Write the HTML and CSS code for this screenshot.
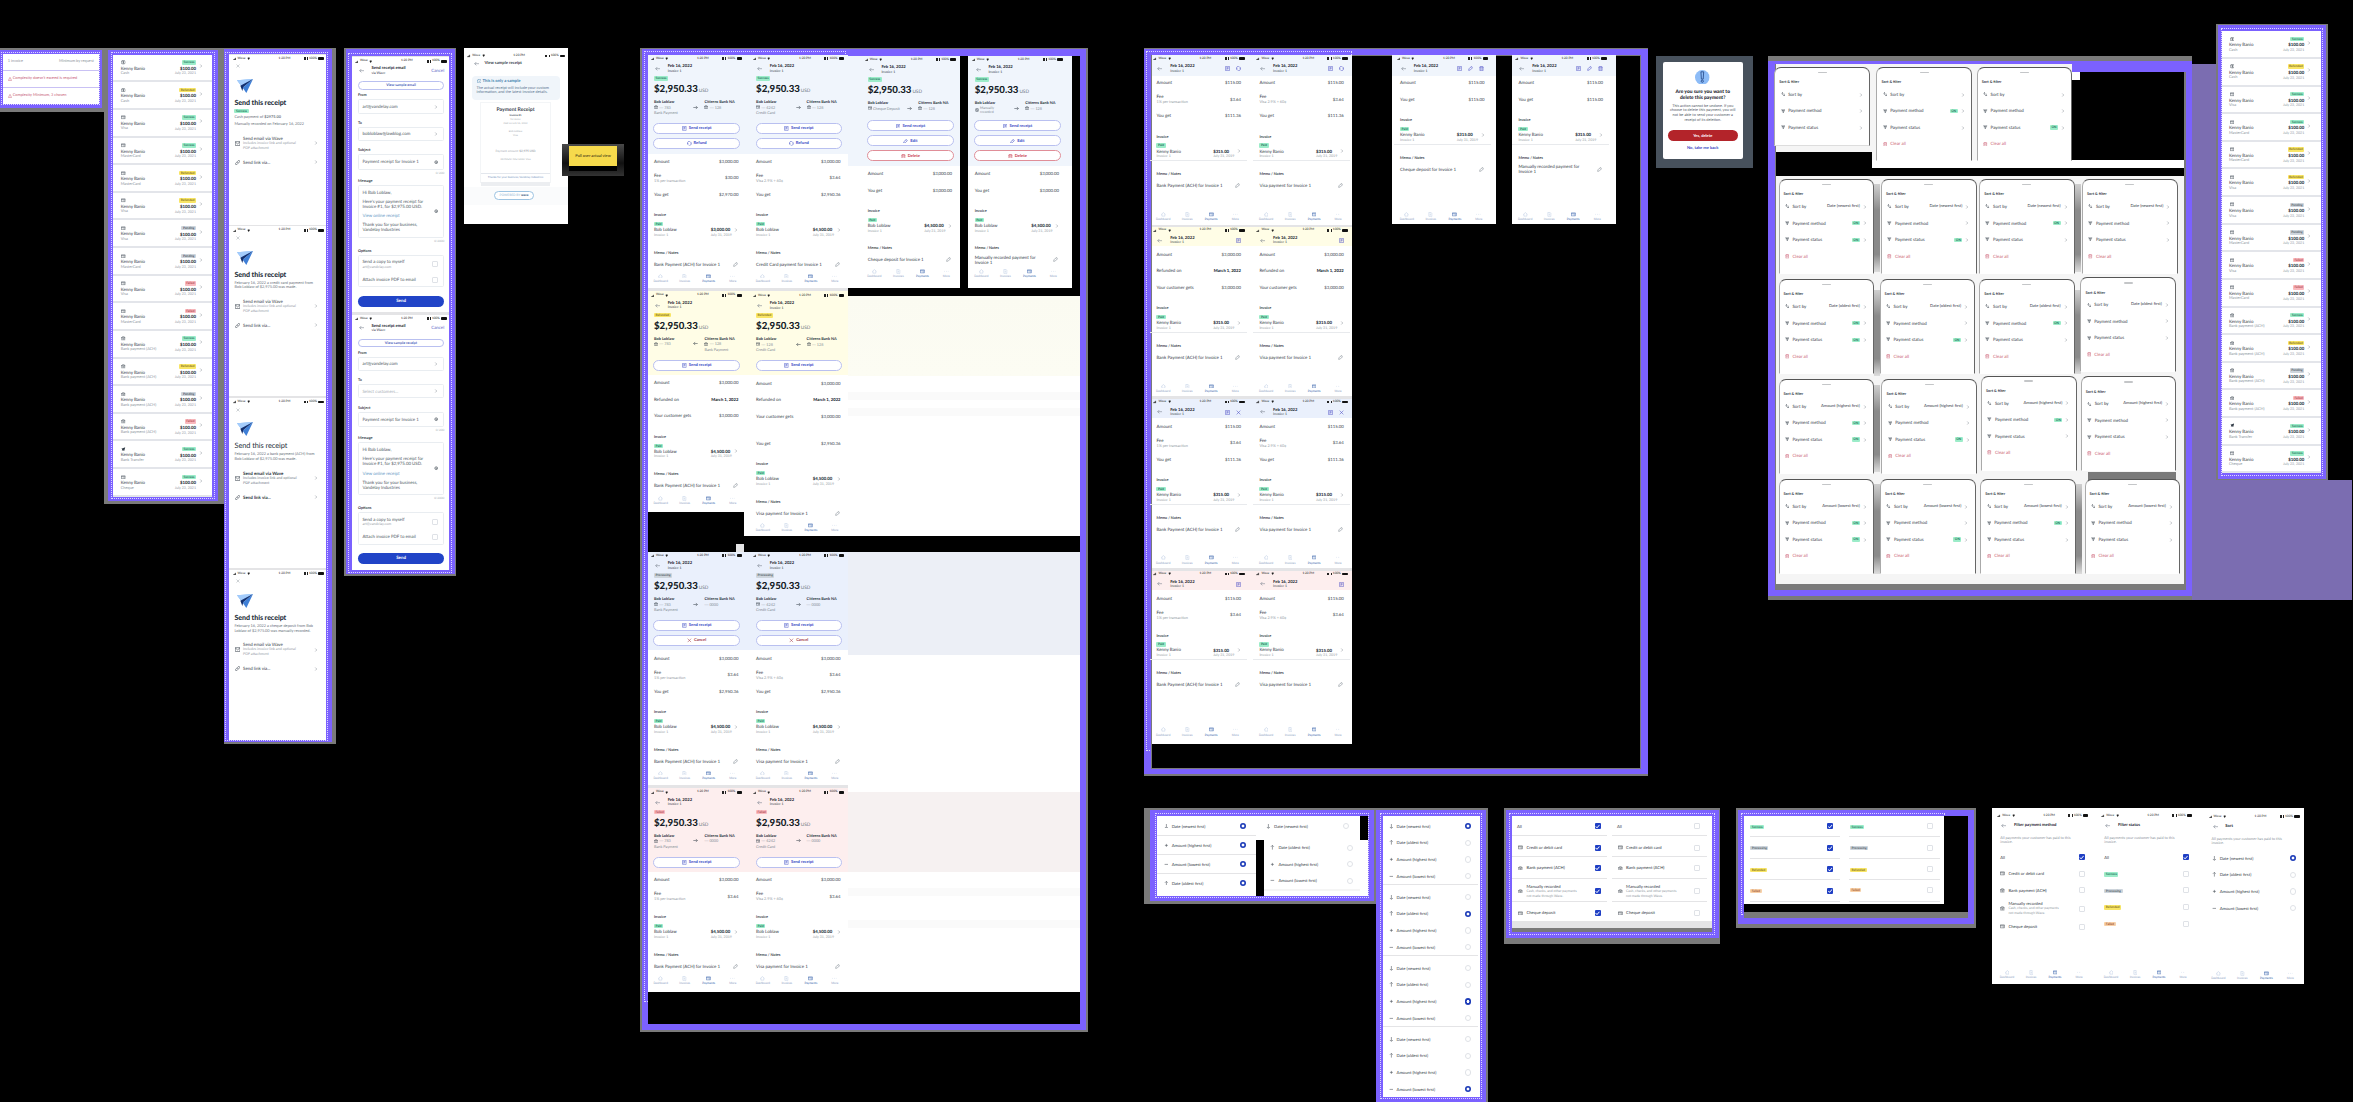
FILE: index.html
```html
<!DOCTYPE html>
<html lang="en">
<head>
<meta charset="utf-8">
<title>Payments - flows</title>
<link rel="stylesheet" href="styles.css">
</head>
<body>
<svg class="sprite" aria-hidden="true">
  <symbol id="left" viewBox="0 0 16 16"><path d="M15 8H2M7 3L2 8l5 5"/></symbol>
  <symbol id="right" viewBox="0 0 16 16"><path d="M1 8h13M9 3l5 5-5 5"/></symbol>
  <symbol id="chev" viewBox="0 0 16 16"><path d="M5 2l6 6-6 6"/></symbol>
  <symbol id="close" viewBox="0 0 16 16"><path d="M2 2l12 12M14 2L2 14"/></symbol>
  <symbol id="receipt" viewBox="0 0 16 16"><path d="M2 1h12v14H2zM5 5h6M5 8h6M5 11h3"/></symbol>
  <symbol id="refund" viewBox="0 0 16 16"><path d="M2 10a6 6 0 0 1 9-7.500M14 6a6 6 0 0 1-9 7.500M0 8l2 3 3-2M16 8l-2-3-3 2"/></symbol>
  <symbol id="pencil" viewBox="0 0 16 16"><path d="M2 14l1-5 8-8 4 4-8 8zM9 4l3 3"/></symbol>
  <symbol id="trash" viewBox="0 0 16 16"><path d="M1 4h14M5 4V1h6v3M3 4v11h10V4M6 7v5M10 7v5"/></symbol>
  <symbol id="bank" viewBox="0 0 16 16"><path d="M1 6l7-5 7 5zM3 6v7M8 6v7M13 6v7M1 14h14"/></symbol>
  <symbol id="card" viewBox="0 0 16 16"><path d="M1 3h14v10H1zM1 6h14M9 10h4"/></symbol>
  <symbol id="coin" viewBox="0 0 16 16"><circle cx="8" cy="8" r="7"/><path d="M10 5c-4-2-5 2-2 3s2 5-2 3M8 3v10"/></symbol>
  <symbol id="swift" viewBox="0 0 16 16"><path class="solid" d="M1 6L15 1l-4 13-4-3-4 2 1-5z"/></symbol>
  <symbol id="mail" viewBox="0 0 16 16"><path d="M1 2h14v12H1zM1 3l7 6 7-6"/></symbol>
  <symbol id="link" viewBox="0 0 16 16"><path d="M7 5l3-3c3-2 6 1 4 4l-3 3c-1 1-3 1-4 0M9 11l-3 3c-3 2-6-1-4-4l3-3c1-1 3-1 4 0"/></symbol>
  <symbol id="home" viewBox="0 0 16 16"><path d="M1 8l7-6 7 6M3 7v7h10V7"/></symbol>
  <symbol id="doc" viewBox="0 0 16 16"><path d="M3 1h7l3 4v10H3zM6 7h4M6 10h4"/></symbol>
  <symbol id="dots" viewBox="0 0 16 16"><path d="M1 8h2M7 8h2M13 8h2"/></symbol>
  <symbol id="sort" viewBox="0 0 16 16"><path d="M5 10V2M2 5l3-3 3 3M11 6v8M8 11l3 3 3-3"/></symbol>
  <symbol id="filter" viewBox="0 0 16 16"><path d="M1 3h14M3 7h10M6 11h4M4 3l3 4M12 3L9 7M8 8v6"/></symbol>
  <symbol id="down" viewBox="0 0 16 16"><path d="M8 0v14M3 10l5 5 5-5"/></symbol>
  <symbol id="up" viewBox="0 0 16 16"><path d="M8 16V2M3 6l5-5 5 5"/></symbol>
  <symbol id="plus" viewBox="0 0 16 16"><path d="M8 3v10M3 8h10"/></symbol>
  <symbol id="minus" viewBox="0 0 16 16"><path d="M2 8h12"/></symbol>
  <symbol id="gear" viewBox="0 0 16 16"><circle cx="8" cy="8" r="5"/><circle cx="8" cy="8" r="1"/></symbol>
  <symbol id="info" viewBox="0 0 16 16"><circle cx="8" cy="8" r="7"/><path d="M8 7v5M8 4v1"/></symbol>
  <symbol id="warn" viewBox="0 0 16 16"><path d="M8 1l7 13H1zM8 6v4M8 12v1"/></symbol>
  <symbol id="signal" viewBox="0 0 16 16"><path class="solid" d="M0 12h3v3H0zM4 9h3v6H4zM8 6h3v9H8zM12 3h3v12h-3z"/></symbol>
  <symbol id="wifi" viewBox="0 0 16 16"><path class="solid" d="M8 14L2 5c4-3 8-3 12 0z"/></symbol>
  <symbol id="plane" viewBox="0 0 48 42"><path fill="#7db4f5" d="M0 4L48 0 17 26z"/><path fill="#3f7fd6" d="M17 26L48 0 28 42z"/><path fill="#a4ccfb" d="M0 4L48 0 12 20z"/><path fill="#14306f" d="M10 20L48 0 19 24l-3 12z"/></symbol>
  <symbol id="alert" viewBox="0 0 16 16"><circle cx="8" cy="8" r="8" fill="#8dbcf7"/><path fill="#8dbcf7" stroke="#173a7a" stroke-width=".8" d="M6.500 2h3L9 10H7z"/><circle cx="8" cy="12.300" r="1.200" fill="#8dbcf7" stroke="#173a7a" stroke-width=".8"/></symbol>
</svg>
<main class="canvas" id="canvas"></main>
<script src="app.js"></script>
</body>
</html>
```
FILE: styles.css
```css
* { box-sizing: border-box; }
body {
  margin: 0;
  background: #000;
  overflow: hidden;
  font-family: Lato, "Open Sans", sans-serif;
  font-size: 4.45px;
  line-height: 1.2;
  color: #36404a;
  text-rendering: geometricPrecision;
  white-space: nowrap;
}
.sprite { position: absolute; width: 0; height: 0; }
.canvas { position: relative; width: 2353px; height: 1102px; overflow: hidden; background: #000; }
.item { position: absolute; }

/* icons */
.ic { width: 4.6px; height: 4.6px; flex: none; fill: none; stroke: currentColor; stroke-width: 1.7; display: block; }
.ic .solid, .solid { fill: currentColor; stroke: none; }
.ic-chev { width: 4px; height: 4px; color: #66707a; }

/* surfaces */
.grey { background: #7a7a7a; }
.purple { background: #7b61ff; }
.haze { background: #7b6db1; }
.white { background: #fff; }
.paper { background: #f5f5f5; }
.mist { background: #e4e4e6; }
.black { background: #000; }
.shade { background: linear-gradient(#cfcfcf, #8a8a8a 30%, #8a8a8a 80%, #ddd); }
.dotted { border: 1px dotted rgba(255, 255, 255, .75); }
.t-blue { background: #f0f5fc; }
.t-yellow { background: #fffde6; }
.t-indigo { background: #eaf0fc; }
.t-red { background: #fdeeee; }
.w-yellow { background: linear-gradient(#fbfbf1, #fcfcf3); }
.w-indigo { background: #eceff6; }
.w-red { background: #f6f1f1; }
.band { background: #fafafa; }

/* badges */
.badge { display: inline-block; padding: 0 1.5px; height: 4.4px; line-height: 4.4px; font-size: 3.2px; font-weight: 700; border-radius: 1px; }
.b-green { background: #9cecc9; color: #20735a; }
.b-yellow { background: #f8e566; color: #857020; }
.b-grey { background: #ced5dc; color: #505a66; }
.b-red { background: #f9b8bd; color: #b04a54; }
.b-orange { background: #f8d0a8; color: #a1562c; }

/* status bar */
.status { display: grid; grid-template-columns: 4px 36px 1fr auto; align-items: center; height: 8px; padding: 0 2.6px 0 3.3px; font-size: 3.1px; color: #222; column-gap: 1px; flex: none; }
.status .ic { width: 3.4px; height: 3.4px; }
.status .carrier { display: flex; align-items: center; gap: 1.5px; }
.status .time { padding-left: 4px; }
.status .power { display: flex; align-items: center; gap: 1.2px; }
.dot { width: 2px; height: 2.6px; background: #222; }
.dot.thin { width: 1px; }
.battery { width: 5.6px; height: 2.6px; border-radius: .8px; background: #111; }

/* screens */
.screen { display: flex; flex-direction: column; }
.head { display: flex; align-items: center; height: 12px; padding: 0 6.3px; flex: none; }
.head .back { color: #77818c; width: 5.4px; height: 5.4px; margin: 0 7.3px 0 1px; }
.head .titles { flex: 1; }
.head b { display: block; font-size: 4.2px; line-height: 4.6px; color: #1c2530; }
.head small { display: block; font-size: 3.5px; line-height: 4.2px; }
.head .tools { display: flex; gap: 6px; color: #4a4bc4; padding-right: .2px; }
.head .tools .ic { width: 5px; height: 5px; }
.hero { padding: 0 6.3px; display: flex; flex-direction: column; flex: none; }
.hero .tag { height: 8.5px; padding-top: 1.8px; line-height: 4.4px; display: flex; }
.hero .sum { height: 13.5px; display: flex; align-items: baseline; gap: 1px; font-size: 9.7px; line-height: 13.5px; font-weight: 900; color: #161d27; letter-spacing: -.02px; }
.hero .sum span { font-size: 4.7px; font-weight: 400; color: #6a737d; }
.parties { display: grid; grid-template-columns: 39.5px 11px 1fr; height: 26.5px; padding-top: 2.5px; line-height: 5.4px; font-size: 3.8px; color: #858d96; }
.parties.short { height: 22.8px; }
.parties b { display: block; font-size: 3.9px; color: #2a333d; }
.parties .acct { display: flex; align-items: center; gap: 1.3px; }
.parties .ic { width: 4px; height: 4px; color: #39424c; }
.parties .via { align-self: start; margin-top: 5.6px; width: 5px; height: 5px; }
.parties .two { line-height: 4.8px; font-size: 3.5px; white-space: normal; width: 20px; }
.btn { display: flex; align-items: center; justify-content: center; gap: 2px; height: 11px; margin-bottom: 4px; border: 1px solid #b9c0f0; border-radius: 6px; background: #fff; color: #3546c4; font-weight: 700; font-size: 4.1px; flex: none; width: 86.5px; margin-left: -.5px; }
.btn .ic { width: 4.8px; height: 4.8px; }
.btn.danger { color: #c63648; border-color: #e08e98; }
.btn.cancel { color: #a03a4c; }
.row { height: 16.5px; padding: 0 6.3px; display: flex; align-items: center; justify-content: space-between; flex: none; }
.row .val { font-size: 4.3px; }
.row small { display: block; font-size: 3.8px; color: #959da6; line-height: 4.4px; margin-top: .6px; }
.row b { font-weight: 900; font-size: 4.2px; color: #242d37; }
.row.gap { margin-top: 10.7px; }
.label { margin-top: 7.5px; height: 9px; line-height: 9px; padding: 0 6.3px; font-weight: 700; font-size: 3.75px; flex: none; }
.inv { height: 20.5px; padding: 2px 6.3px 0; display: grid; grid-template-columns: 1fr auto 6.5px; grid-template-rows: 6px 5.2px 5px; flex: none; align-items: center; }
.inv .badge { grid-column: 1 / 4; justify-self: start; }
.inv b { color: #2a333d; font-weight: 900; font-size: 4.3px; }
.inv .ic { justify-self: end; }
.inv small { font-size: 3.6px; color: #949ca5; }
.inv small + small { text-align: right; }
.lined { border-bottom: 1px solid #e8eaed; }
.note { height: 15px; padding: 0 7px 0 6.3px; display: flex; align-items: center; justify-content: space-between; flex: none; line-height: 5px; }
.label.memo { margin-top: 8px; }
.note span { white-space: pre; }
.note .ic { color: #7b848e; width: 5px; height: 5px; }
.nav { margin-top: auto; height: 12px; display: grid; grid-template-columns: repeat(4, 24px); font-size: 3px; color: #8499bd; text-align: center; padding-left: 1px; flex: none; }
.nav div { display: flex; flex-direction: column; align-items: center; gap: 1.5px; }
.nav .ic { color: #b5c8e2; width: 4.8px; height: 4.8px; }
.nav .on, .nav .on .ic { color: #2d5aa8; }

/* payment list */
.list { display: flex; flex-direction: column; }
.pay { height: 27.75px; border-bottom: 2px solid #e3e5ea; background: #fff; padding: 4.6px 7.4px 0; display: grid; grid-template-columns: 25px 50.3px 1fr; grid-template-rows: 6.3px 5.5px 5px; align-items: center; }
.pay .lead { margin-left: .8px; width: 4.6px; height: 4.6px; }
.pay .badge, .pay b, .pay .date { justify-self: end; }
.pay .badge { grid-column: 2; }
.pay .name { grid-column: 1; }
.pay b { grid-column: 2; font-weight: 900; font-size: 4.3px; color: #2a333d; }
.pay .ic-chev { grid-column: 3; grid-row: 1 / 4; justify-self: center; margin-bottom: 3px; }
.pay small { font-size: 3.6px; color: #8e969f; }
.pay small.kind { grid-column: 1; grid-row: 3; font-size: 3.9px; }

/* errors */
.errors { display: flex; flex-direction: column; gap: 1.3px; background: #c9c1f4; }
.errors div { flex: 1; display: flex; align-items: center; justify-content: space-between; padding: 0 5px; background: #fff; font-size: 3.9px; color: #8f969e; }
.errors .err { justify-content: flex-start; gap: 1px; color: #c76078; }
.errors .ic { width: 4px; height: 4px; }

/* share receipt */
.share .x { margin: 1.6px 0 0 7px; color: #8a939c; width: 4px; height: 4px; }
.share .plane { width: 16px; height: 14px; margin: 10.7px 0 0 7.5px; flex: none; }
.share h2 { margin: 5px 0 0 5.2px; font-size: 7.1px; line-height: 9px; font-weight: 900; color: #26303b; letter-spacing: -.07px; }
.share h2.thin { font-weight: 400; font-size: 7.4px; }
.share .copy { padding: 2.2px 0 0 5.2px; font-size: 3.9px; line-height: 4.7px; color: #6a737d; }
.share .copy.tall { line-height: 6.4px; padding-top: 1.8px; }
.share .copy .badge { display: table; margin: 0 0 1.2px; }
.share .opt { display: grid; grid-template-columns: 7.7px 1fr 7px; padding: 0 5.5px 0 6px; align-items: center; height: 19px; margin-top: 6.8px; }
.share .opt + .opt { margin-top: 0; height: 18px; padding-top: 1px; }
.share .opt p { margin: 0; line-height: 5px; }
.share .opt p.strong { font-weight: 700; color: #2a333d; }
.share .opt small { font-size: 3.65px; color: #969ea7; display: block; line-height: 4.9px; }
.share .opt .ic:first-child { width: 5.2px; height: 5.2px; }

/* email form */
.email .head { height: 16px; padding: 0 5px 5px 6.3px; }
.email .head .back { margin: 0 7px 0 1px; }
.email .head a { color: #5a66c8; font-size: 4.4px; }
.email .btn { height: 8.5px; width: 86px; margin: 0 0 1.7px 6.3px; font-size: 3.6px; color: #3f58b8; }
.field-label { font-size: 3.75px; font-weight: 700; height: 8px; line-height: 8px; padding-left: 6.3px; flex: none; }
.box { margin: 0 5px 0 6.3px; border: 1px solid #e9edf1; border-radius: 1.5px; display: flex; align-items: center; justify-content: space-between; padding: 0 5px 0 3.5px; flex: none; height: 14.3px; font-size: 4.4px; color: #505a64; }
.box + .field-label { margin-top: 5.1px; }
.box.subject { height: 15.5px; }
.box.msg { height: 53px; }
.box.msg p { margin: 0 0 4px; line-height: 5.1px; }
.box.msg p:last-child { margin: 0; }
.box.msg a { color: #5f96c4; }
.box .ic { color: #39424c; width: 4.4px; height: 4.4px; stroke-width: 2.2; }
.box .ic-chev { color: #66707a; width: 4px; height: 4px; stroke-width: 1.7; }
.box .ph { color: #a9b0b7; }
.counter { text-align: right; padding-right: 5px; height: 7px; font-size: 3px; line-height: 6px; color: #a9b0b7; flex: none; }
.counter.big { height: 9px; }
.box.opts { height: 32.5px; flex-direction: column; align-items: stretch; justify-content: space-around; }
.box.opts > div { display: flex; justify-content: space-between; align-items: center; }
.box.opts small { display: block; font-size: 3.6px; color: #9aa1a9; }
.send { margin: 8.6px 5px 0 6.3px; height: 10.8px; line-height: 10.8px; border-radius: 6px; background: #2144c7; color: #fff; text-align: center; font-weight: 700; flex: none; }

/* controls */
.check { width: 6px; height: 6px; border-radius: 1px; border: 1px solid #dfe2e7; background: #fff; flex: none; display: block; }
.check.on { background: #1f3fc4; border: 0; }
.check.on::after { content: ""; display: block; width: 6px; height: 6px; background: #fff; clip-path: polygon(20% 48%, 40% 66%, 76% 24%, 86% 34%, 41% 84%, 12% 58%); }
.radio { width: 6.2px; height: 6.2px; border-radius: 50%; border: 1px solid #dfe2e7; background: #fff; flex: none; }
.radio.on { border: 0; background: radial-gradient(circle, #fff 0 1.2px, #1d3cb8 1.7px); }

/* option rows */
.options { display: flex; flex-direction: column; background: #fff; font-size: 4.2px; }
.options .o { display: flex; align-items: center; height: 16.6px; flex: none; }
.options .o:has(small) { height: 19.5px; }
.options .o > .ic { width: 4.8px; height: 4.8px; margin-right: 3.3px; color: #39424c; }
.options .o > span:not(.badge) { flex: 1; }
.options small { display: block; font-size: 3.4px; line-height: 4.7px; color: #929aa3; }

/* filter sheet */
.sheet { background: #fff; border: 1px solid #6a6a6a; border-color: #555 #666 transparent #aaa; border-radius: 7px 7px 0 0; display: flex; flex-direction: column; }
.sheet.first { border-bottom-color: #ddd; }
.grip { width: 9px; height: 1.6px; border-radius: 1px; background: #c4c6c8; margin: 3.7px auto 0; flex: none; }
.sheet h3 { margin: 5px 0 0 4px; font-size: 3.8px; line-height: 8px; font-weight: 700; }
.srow { display: flex; align-items: center; height: 16.5px; padding: 0 6.2px 0 5.3px; flex: none; }
.srow > .ic:first-child { margin-right: 3px; }
.srow span { flex: 1; }
.srow .value { flex: none; font-size: 4.1px; margin-right: 3px; }
.srow .badge { flex: none; margin-right: 3px; }
.srow.clear { color: #cc5f74; }

/* confirm dialog */
.modal { background: #47515c; padding: 6px 10px 9.3px 7px; display: flex; }
.dialog { flex: 1; background: #fff; border-radius: 2px; display: flex; flex-direction: column; align-items: center; text-align: center; padding-top: 7.5px; }
.dialog .alert { width: 14.6px; height: 14.6px; }
.dialog h2 { margin: 4.8px 0 0; font-size: 4.9px; line-height: 6.3px; font-weight: 900; color: #1a222c; }
.dialog p { margin: 2.2px 0 0; font-size: 3.85px; line-height: 4.8px; color: #58616b; }
.dialog .yes { width: 70px; height: 11px; line-height: 11px; margin-top: 7.5px; border-radius: 6px; background: #b3242a; color: #fff; font-weight: 700; font-size: 4px; }
.dialog a { margin-top: 5px; color: #3546c4; font-weight: 700; font-size: 4.1px; }

/* sample receipt */
.sample { background: #fff; padding-top: 4px; }
.sample .head { height: 7px; padding: 0 10px; }
.sample .head .back { margin: 0 5px 0 0; }
.sample .head b { font-weight: 700; color: #39424c; }
.sample .tip { margin: 8.5px 8px 0; height: 24px; border-radius: 4px; background: #f0f5fa; padding: 2px 4.5px; line-height: 4.4px; font-size: 3.9px; color: #5c7590; flex: none; }
.sample .tip div { display: flex; align-items: center; gap: 1.5px; color: #3b7dad; font-weight: 700; height: 7px; margin-bottom: 1px; font-size: 4.2px; }
.sample .slip { margin: 2.5px 17px 0 16px; height: 80.5px; border: 1px solid #f3f5f7; text-align: center; font-size: 2.6px; line-height: 4px; padding-top: 3.500px; color: #a7adb4; flex: none; display: flex; flex-direction: column; }
.slip h2 { margin: 0; font-size: 5.1px; line-height: 6px; color: #39424c; font-weight: 700; }
.slip .sub { color: #39424c; font-weight: 700; }
.slip .pay-line { margin-top: 12.5px; font-size: 3px; }
.slip .pay-line + div { margin-top: 4px; }
.slip .foot { margin-top: 12px; height: 7px; line-height: 7px; border-top: 1px solid #e3e7ed; color: #7191bd; font-size: 2.800px; }
.slip .bar { height: 3.5px; background: #eceef1; margin-top: 2px; flex: none; }
.sample .strip { margin-top: 4px; background: #fafbfc; height: 18px; flex: none; display: flex; justify-content: center; align-items: center; }
.pill { height: 8.7px; padding: 0 4.5px; border: 1px solid #9cc3e2; border-radius: 5px; line-height: 6.900px; font-size: 3.2px; color: #8cb0d0; background: #fff; margin-right: 4px; }
.pill b { color: #2a4f7a; }

/* sticky note */
.sticky-shadow { background: linear-gradient(#4a4a4a, #111 60%, #333); }
.sticky { background: #f6da4c; line-height: 20px; text-align: center; font-size: 3.9px; color: #5c5120; font-weight: 700; }

/* filter screens */
.desc { padding: 0 6.3px; height: 10px; font-size: 3.7px; line-height: 4.7px; color: #8a929b; margin: 4px 0 0; flex: none; }
.picker { flex: 1; background: none; padding: 3.3px 6.3px 0; }
```
FILE: app.js
```javascript
const out = [];
const ic = (n, c = '') => `<svg class="ic ${c}"><use href="#${n}"/></svg>`;
const chev = ic('chev', 'ic-chev');
const put = (x, y, w, h, cls, html = '') =>
  out.push(`<div class="item ${cls}" style="left:${x}px;top:${y}px;width:${w}px;height:${h}px">${html}</div>`);
/* rectangle given by its two corners */
const rect = (x1, y1, x2, y2, cls) => put(x1, y1, x2 - x1, y2 - y1, cls);

const TONE = { Success: 'green', Paid: 'green', ON: 'green', Refunded: 'yellow', Pending: 'grey', Processing: 'grey', Failed: 'red' };
const badge = (t, tone = TONE[t]) => `<span class="badge b-${tone}">${t}</span>`;
const status = `<div class="status">${ic('signal')}<span class="carrier">Wave ${ic('wifi')}</span><span class="time">1:20 PM</span><span class="power"><i class="dot"></i><i class="dot thin"></i>100%<i class="battery"></i></span></div>`;
const nav = `<div class="nav"><div>${ic('home')}Dashboard</div><div>${ic('doc')}Invoices</div><div class="on">${ic('card')}Payments</div><div>${ic('dots')}More</div></div>`;
const head = (tools = []) => `<div class="head">${ic('left', 'back')}<div class="titles"><b>Feb 16, 2022</b><small>Invoice 1</small></div><div class="tools">${tools.map(t => ic(t)).join('')}</div></div>`;
const row = ([k, v, sub, cls = '']) => `<div class="row ${cls}"><span>${k}${sub ? `<small>${sub}</small>` : ''}</span><span class="val">${v}</span></div>`;
const tail = (who, sum, date, note, lined) => `<div class="label">Invoice</div>
  <div class="inv ${lined ? 'lined' : ''}">${badge('Paid')}<span>${who}</span><b>${sum}</b>${chev}<small>Invoice 1</small><small>${date}</small></div>
  <div class="label memo">Memo / Notes</div><div class="note"><span>${note}</span>${ic('pencil')}</div>${nav}`;

/* ---- validation messages ---- */
rect(0, 48, 104, 112, 'grey');
rect(0, 50, 102, 107.5, 'purple');
rect(1, 52, 100, 105, 'dotted');
put(2.7, 54, 96.3, 49.5, 'errors', `<div><span>1 invoice</span><span>Minimum by request</span></div>
<div class="err">${ic('warn')}Complexity doesn't exceed is required</div><div class="err">${ic('warn')}Complexity Minimum, 3 chosen</div>`);

/* ---- payment lists ---- */
const payments = [['coin', 'Cash', 'Success'], ['coin', 'Cash', 'Refunded'], ['card', 'Visa', 'Success'], ['card', 'MasterCard', 'Success'],
  ['card', 'MasterCard', 'Refunded'], ['card', 'Visa', 'Refunded'], ['card', 'Visa', 'Pending'], ['card', 'MasterCard', 'Pending'],
  ['card', 'Visa', 'Failed'], ['card', 'MasterCard', 'Failed'], ['bank', 'Bank payment (ACH)', 'Success'], ['bank', 'Bank payment (ACH)', 'Refunded'],
  ['bank', 'Bank payment (ACH)', 'Pending'], ['bank', 'Bank payment (ACH)', 'Failed'], ['swift', 'Bank Transfer', 'Success'], ['card', 'Cheque', 'Success']];
const list = payments.map(([i, k, s]) => `<div class="pay">${ic(i, 'lead')}${badge(s)}<span class="name">Kenny Banio</span><b>$100.00</b><small class="kind">${k}</small><small class="date">July 23, 2021</small>${chev}</div>`).join('');
rect(104, 48, 224, 504, 'grey');
rect(108.3, 50, 217.7, 501, 'purple');
rect(111, 52, 215, 499, 'dotted');
put(113.3, 54.7, 99.2, 442, 'list', list);

/* ---- send this receipt ---- */
rect(224, 48, 336, 744, 'grey');
rect(224, 49, 332, 742, 'purple');
rect(225, 52, 328, 741, 'dotted');
rect(229.3, 54, 326.5, 739.5, 'mist');
const share = (y, copy, o = {}) => put(229.3, y, 97, 170, 'screen share white', `${status}${ic('close', 'x')}
<svg class="plane"><use href="#plane"/></svg><h2 class="${o.thin ? 'thin' : ''}">Send this receipt</h2><div class="copy ${o.tall ? 'tall' : ''}">${copy}</div>
<div class="opt">${ic('mail')}<p class="${o.thin ? 'strong' : ''}">Send email via Wave<small>Includes invoice link and optional<br>PDF attachment</small></p>${chev}</div>
<div class="opt">${ic('link')}<p class="${o.thin ? 'strong' : ''}">Send link via...</p>${chev}</div>`);
share(54.7, `${badge('Success')}Cash payment of <b>$2975.00</b><br>Manually recorded on February 16, 2022`, { tall: true });
share(226.3, 'February 16, 2022 a credit card payment from<br>Bob Loblaw of $2,975.00 was made.');
share(398, 'February 16, 2022 a bank payment (ACH) from<br>Bob Loblaw of $2,975.00 was made.', { thin: true });
share(569.7, 'February 16, 2022 a cheque deposit from Bob<br>Loblaw of $2,975.00 was manually recorded.');

/* ---- send receipt email ---- */
rect(344, 48, 456, 576, 'grey');
rect(346, 49, 455, 574, 'purple');
rect(348, 53, 452, 573, 'dotted');
rect(351.7, 56, 449.3, 570, 'mist');
const email = (y, btn, to) => put(351.7, y, 97.5, 255, 'screen email white', `${status}
<div class="head">${ic('left', 'back')}<div class="titles"><b>Send receipt email</b><small>via Wave</small></div><a>Cancel</a></div>
<div class="btn">${btn}</div>
<div class="field-label">From</div><div class="box"><span>art@vandelay.com</span>${chev}</div>
<div class="field-label">To</div><div class="box">${to}${chev}</div>
<div class="field-label">Subject</div><div class="box subject"><span>Payment receipt for Invoice 1</span>${ic('gear')}</div><div class="counter">0/200</div>
<div class="field-label">Message</div><div class="box msg"><div><p>Hi Bob Loblaw,</p><p>Here's your payment receipt for<br>Invoice #1, for $2,975.00 USD.</p><p><a>View online receipt</a></p><p>Thank you for your business,<br>Vandelay Industries</p></div>${ic('gear')}</div><div class="counter big">0/2000</div>
<div class="field-label">Options</div><div class="box opts"><div><span>Send a copy to myself<small>art@vandelay.com</small></span><i class="check"></i></div><div><span>Attach invoice PDF to email</span><i class="check"></i></div></div>
<div class="send">Send</div>`);
email(57.3, 'View sample email', '<span>bobloblaw@lawblog.com</span>');
email(314.6, 'View sample receipt', '<span class="ph">Select customers...</span>');

/* ---- sample receipt and sticky ---- */
put(464, 48, 104, 176, 'screen sample', `${status}<div class="head">${ic('left', 'back')}<b>View sample receipt</b></div>
<div class="tip"><div>${ic('info')}This is only a sample</div>The actual receipt will include your custom<br>information, and the latest invoice details.</div>
<div class="slip"><h2>Payment Receipt</h2><span class="sub">Invoice #1</span><span>for Acme<br>Paid on Feb 16, 2022<br>&nbsp;<br>Bob Loblaw<br>Visa</span>
<div class="pay-line">Payment amount: <b>$2,975 USD</b></div><div>PAYMENT METHOD: Visa</div><div class="foot">Thanks for your business, Vandelay Industries</div><div class="bar"></div></div>
<div class="strip"><span class="pill">POWERED BY <b>wave</b></span></div>`);
rect(562, 144, 624, 176, 'sticky-shadow');
rect(569, 166, 617, 171, 'black');
put(569, 146, 48, 20, 'sticky', 'Pull over actual view');

/* ---- payment details, expanded header ---- */
rect(640, 48, 1088, 1032, 'grey');
rect(642, 49, 1086, 1030, 'purple');
rect(643.5, 51, 846, 1002, 'dotted');
rect(648, 56, 1080, 1024, 'black');
rect(648, 54.5, 848, 512, 'white');
rect(848, 56, 960, 288, 'white');
rect(968, 56, 1072, 288, 'white');
rect(848, 296, 1080, 536, 'white');
rect(744, 500, 848, 536, 'white');
rect(648, 552, 1080, 992, 'white');
rect(736, 544, 744, 552, 'mist');
rect(648, 54.5, 848, 154, 't-blue');
rect(848, 56, 960, 166, 't-blue');
rect(968, 56, 1072, 166, 't-blue');
rect(648, 288, 848, 290.5, 'mist');
rect(648, 290.5, 848, 374.5, 't-yellow');
rect(848, 296, 1080, 376, 'w-yellow');
rect(848, 392, 1080, 400, 'band');
rect(848, 408, 1080, 416, 'band');
rect(648, 552, 848, 650, 't-indigo');
rect(848, 552, 1080, 655, 'w-indigo');
rect(648, 784.5, 848, 787.5, 'mist');
rect(648, 787.5, 848, 871.5, 't-red');
rect(848, 792, 1080, 872, 'w-red');
rect(848, 888, 1080, 896, 'band');
rect(848, 920, 1080, 928, 'band');

const BTN = { receipt: ['receipt', 'Send receipt', ''], refund: ['refund', 'Refund', ''], edit: ['pencil', 'Edit', ''], del: ['trash', 'Delete', 'danger'], cancel: ['close', 'Cancel', 'cancel'] };
const party = (n, i, t, sub = '') => `<div><b>${n}</b><div class="acct">${i ? ic(i) : ''}<span>${t}</span></div>${sub}</div>`;
const detail = (x, y, h, o) => put(x, y, 97, h, 'screen', `${status}${head()}
<div class="hero"><div class="tag">${badge(o.state, o.tone)}</div><div class="sum">$2,950.33<span>USD</span></div>
<div class="parties ${o.short ? 'short' : ''}">${party('Bob Loblaw', ...o.from)}${ic(o.back ? 'left' : 'right', 'via')}${party('Citizens Bank NA', ...o.to)}</div>
${o.btns.map(b => `<div class="btn ${BTN[b][2]}">${ic(BTN[b][0])}${BTN[b][1]}</div>`).join('')}</div>
${o.rows.map(row).join('')}${tail('Bob Loblaw', o.inv || '$4,500.00', o.date || 'July 31, 2019', o.note)}`);
const A3 = ['Amount', '$3,000.00'], ACH = 'Bank Payment (ACH) for Invoice 1', VISA = 'Visa payment for Invoice 1';
const FB = ['Fee', '$3.64', '1% per transaction'], FV = ['Fee', '$3.64', 'Visa 2.9% + 60¢'], G = ['You get', '$2,950.36'];
const bankFrom = ['bank', '···· 783', 'Bank Payment'], cardFrom = ['card', '···· 4242', 'Credit Card'];
detail(647.7, 54.7, 231, { state: 'Success', from: bankFrom, to: ['bank', '···· 128'], btns: ['receipt', 'refund'], rows: [A3, ['Fee', '$30.00', '1% per transaction'], ['You get', '$2,970.00']], inv: '$3,000.00', note: ACH });
detail(749.8, 54.7, 231, { state: 'Success', from: cardFrom, to: ['bank', '···· 128'], btns: ['receipt', 'refund'], rows: [A3, FV, G], note: 'Credit Card payment for Invoice 1' });
detail(861.4, 55.7, 225.5, { state: 'Success', short: 1, from: ['card', 'Cheque Deposit'], to: ['bank', '···· 128'], btns: ['receipt', 'edit', 'del'], rows: [A3, ['You get', '$3,000.00']], note: 'Cheque deposit for Invoice 1' });
detail(968.4, 55.7, 225.5, { state: 'Success', short: 1, from: ['coin', '<div class="two">Manually recorded</div>'], to: ['bank', '···· 128'], btns: ['receipt', 'edit', 'del'], rows: [A3, ['You get', '$3,000.00']], note: 'Manually recorded payment for\nInvoice 1' });
const R = ['Refunded on', '<b>March 1, 2022</b>'], C = ['Your customer gets', '$3,000.00'];
detail(647.7, 291.3, 216.5, { state: 'Refunded', back: 1, from: ['bank', '···· 783'], to: ['bank', '···· 128', 'Bank Payment'], btns: ['receipt'], rows: [A3, R, C], note: ACH });
detail(749.8, 291.6, 243.5, { state: 'Refunded', back: 1, from: ['card', '···· 128', 'Credit Card'], to: ['bank', '···· 128'], btns: ['receipt'], rows: [A3, R, C, [...G, '', 'gap']], note: VISA });
for (const [x, from, fee, note] of [[647.7, bankFrom, FB, ACH], [749.8, cardFrom, FV, VISA]]) {
  detail(x, 551.7, 231, { state: 'Processing', from, to: ['', '···· 0000'], btns: ['receipt', 'cancel'], rows: [A3, fee, G], note });
  detail(x, 788.3, 199.5, { state: 'Failed', from, to: ['', '···· 0000'], btns: ['receipt'], rows: [A3, fee], note });
}

/* ---- payment details, compact header ---- */
rect(1144, 48, 1648, 776, 'grey');
rect(1144, 49, 1648, 774, 'purple');
rect(1146, 51, 1352, 751, 'dotted');
rect(1151, 55, 1641, 769, 'grey');
rect(1152, 56, 1640, 768, 'black');
rect(1152, 54.5, 1352, 744, 'white');
[['t-blue', 54.5], ['t-yellow', 227], ['t-indigo', 398.7], ['t-red', 570.7]].forEach(([c, y], i) => {
  if (i) rect(1152, y - 2.5, 1352, y, 'mist');
  rect(1152, y, 1352, y + (i ? 19 : 21), c);
});
rect(1392, 54.5, 1496, 224, 'white');
rect(1512, 54.5, 1616, 224, 'white');
rect(1392, 54.5, 1496, 76, 't-blue');
rect(1512, 54.5, 1616, 76, 't-blue');
const compact = (x, y, tools, rows, note) => put(x, y, 97, 169.3, 'screen', `${status}${head(tools)}${rows.map(row).join('')}${tail('Kenny Banio', '$315.00', 'July 31, 2019', note, true)}`);
const A1 = ['Amount', '$115.00'], G1 = ['You get', '$111.36'];
[[1150.2, FB, ACH], [1253.1, FV, VISA]].forEach(([x, fee, note]) => {
  compact(x, 54.7, ['receipt', 'refund'], [A1, fee, G1], note);
  compact(x, 226.3, ['receipt'], [A3, R, C], note);
  compact(x, 398, ['receipt', 'close'], [A1, fee, G1], note);
  compact(x, 570, ['receipt'], [A1, fee], note);
});
const G2 = ['You get', '$115.00'];
compact(1393.8, 54.7, ['receipt', 'pencil', 'trash'], [A1, G2], 'Cheque deposit for Invoice 1');
compact(1512.2, 54.7, ['receipt', 'pencil', 'trash'], [A1, G2], 'Manually recorded payment for\nInvoice 1');

/* ---- delete confirmation ---- */
put(1656, 56, 96.5, 112, 'modal', `<div class="dialog"><svg class="alert"><use href="#alert"/></svg><h2>Are you sure you want to<br>delete this payment?</h2>
<p>This action cannot be undone. If you<br>choose to delete this payment, you will<br>not be able to send your customer a<br>receipt of its deletion.</p><div class="yes">Yes, delete</div><a>No, take me back</a></div>`);

/* ---- sort & filter sheets ---- */
rect(2192, 64, 2328, 600, 'haze');
rect(2192, 480, 2352, 600, 'haze');
rect(1768, 56, 2192, 600, 'grey');
rect(1768, 60.5, 2192, 596, 'purple');
rect(1774.5, 64, 2185.5, 590, 'grey');
rect(1776, 64, 2184, 584, 'paper');
rect(2072, 61, 2186, 72, 'purple');
rect(2072, 72, 2184, 160, 'black');
rect(2072, 72, 2080, 80, 'white');
rect(1872, 160, 2184, 168, 'white');
rect(1776, 152, 1872, 168, 'black');
rect(1776, 168, 2184, 176, 'black');
for (const [x, y, h] of [[1874, 184, 88], [2075, 184, 88], [1874, 290, 86], [2075, 290, 84], [1874, 385, 87], [1874, 484, 90], [2076, 484, 90]]) put(x, y, 5.5, h, 'shade');
rect(2088, 472, 2176, 480, 'grey');
const sheet = (x, y, h, value, method, stat, clear = true, cls = '') => put(x, y, 95.6, h, 'sheet ' + cls, `<div class="grip"></div><h3>Sort &amp; filter</h3>
<div class="srow">${ic('sort')}<span>Sort by</span>${value ? `<span class="value">${value}</span>` : ''}${chev}</div>
<div class="srow">${ic('filter')}<span>Payment method</span>${method ? badge('ON') : ''}${chev}</div>
<div class="srow">${ic('filter')}<span>Payment status</span>${stat ? badge('ON') : ''}${chev}</div>
${clear ? `<div class="srow clear">${ic('trash')}<span>Clear all</span></div>` : ''}`);
sheet(1774.3, 67, 78.5, '', 0, 0, false, 'first');
sheet(1876.4, 67, 94, '', 1, 0);
sheet(1976.7, 67, 94, '', 0, 1);
const grid = [
  ['Date (newest first)', [1778.5, 179.2], [1881, 179.2], [1979.2, 179.2], [2082, 179.2]],
  ['Date (oldest first)', [1778.5, 279.2], [1879.6, 279.2], [1979.2, 279.2], [2080.4, 277.3]],
  ['Amount (highest first)', [1778.5, 379], [1881.4, 379], [1981, 375.7], [2080.8, 376.3]],
  ['Amount (lowest first)', [1778.5, 479], [1880, 479], [1980.3, 479], [2084.5, 479]]];
for (const [v, ...cells] of grid) cells.forEach(([x, y], i) => sheet(x, y, 95, v, i === 0 || i === 2, i < 2));

/* ---- second payment list ---- */
rect(2216, 24, 2328, 480, 'grey');
rect(2218, 25, 2326, 479, 'purple');
rect(2221, 28, 2323, 476, 'dotted');
put(2221.6, 31.3, 99, 442, 'list', list);

/* ---- sort radios ---- */
const SORT = [['down', 'Date (newest first)'], ['up', 'Date (oldest first)'], ['plus', 'Amount (highest first)'], ['minus', 'Amount (lowest first)']];
const radio = ([i, t], on) => `<div class="o">${ic(i)}<span>${t}</span><i class="radio ${on ? 'on' : ''}"></i></div>`;
rect(1144, 808, 1376, 904, 'grey');
rect(1150, 810, 1374, 901, 'purple');
rect(1155, 813, 1369, 898, 'dotted');
rect(1157, 816, 1360, 840, 'white');
rect(1157, 840, 1256, 896, 'white');
rect(1360, 816, 1368, 840, 'black');
rect(1256, 840, 1264, 896, 'black');
rect(1264, 840, 1368, 896, 'white');
rect(1264, 889, 1360, 891, 'paper');
[0, 2, 3, 1].forEach((k, i) => put(1163.6, 817.8 + i * 19, 82.8, 17, 'options', radio(SORT[k], true)));
[1, 2, 3].forEach(i => rect(1157, 816 + i * 19 - .5, 1256, 816 + i * 19 + .8, 'mist'));
put(1266, 818, 83.2, 17, 'options', radio(SORT[0], false));
put(1270.3, 839.4, 82.8, 49.8, 'options', [1, 2, 3].map(k => radio(SORT[k], false)).join(''));

rect(1376, 808, 1488, 1102, 'grey');
rect(1376, 810, 1486, 1102, 'purple');
rect(1380, 813, 1482, 1099, 'dotted');
rect(1383, 816, 1480, 1097, 'white');
[0, 1, 2, 3].forEach(g => {
  put(1388.5, 818 + g * 71, 82.8, 66.4, 'options', SORT.map((s, i) => radio(s, i === g)).join(''));
  if (g) rect(1383, 813 + g * 71, 1478, 814.2 + g * 71, 'mist');
});

/* ---- payment method checks ---- */
const METHODS = [['', 'All'], ['card', 'Credit or debit card'], ['bank', 'Bank payment (ACH)'], ['bank', 'Manually recorded<small>Cash, checks, and other payments<br>not made through Wave.</small>'], ['card', 'Cheque deposit']];
const check = (i, t, on) => `<div class="o">${i ? ic(i) : ''}<span>${t}</span><i class="check ${on ? 'on' : ''}"></i></div>`;
rect(1504, 808, 1720, 944, 'grey');
rect(1505.5, 810, 1719, 938, 'purple');
rect(1509, 813, 1715, 935, 'dotted');
rect(1512, 816, 1712, 932, 'grey');
rect(1512, 816, 1712, 928, 'mist');
rect(1512, 816, 1712, 921, 'white');
[818, 839.4, 859.7, 881.3, 904.7].forEach((y, i) => {
  put(i ? 1518.4 : 1517, y, i ? 82.2 : 83.6, 16.6, 'options', check(...METHODS[i], true));
  put(i ? 1618 : 1617, y, i ? 82.4 : 83.4, 16.6, 'options', check(...METHODS[i], false));
});
[835, 856, 878, 901.2].forEach(y => { rect(1512, y, 1607, y + 1, 'mist'); rect(1612, y, 1707, y + 1, 'mist'); });

/* ---- status checks ---- */
const STATES = [['Success', 'green'], ['Processing', 'grey'], ['Refunded', 'yellow'], ['Failed', 'orange']];
rect(1736, 808, 1976, 928, 'grey');
rect(1738, 810, 1974, 923.5, 'purple');
rect(1741, 813, 1945, 915, 'dotted');
rect(1744, 816, 1968, 918, 'grey');
rect(1744, 816, 1968, 912, 'black');
rect(1744, 816, 1944, 904, 'white');
STATES.forEach((s, i) => {
  const y = 818 + i * 21.5;
  put(1750.2, y, 83, 16.6, 'options', check('', badge(...s), true));
  put(1850, y - (i === 3 ? 1 : 0), 83, 16.6, 'options', check('', badge(...s), false));
  rect(1750, y + 18, 1840, y + 19, 'mist');
  rect(1849, y + 18, 1940, y + 19, 'mist');
});

/* ---- filter and sort screens ---- */
rect(1992, 808, 2304, 984, 'white');
const filter = (x, y, title, body) => put(x, y, 97, 170.5, 'screen', `${status}<div class="head">${ic('left', 'back')}<div class="titles"><b>${title}</b></div></div>
<p class="desc">All payments your customer has paid to this<br>invoice.</p><div class="options picker">${body}</div>${nav}`);
filter(1994, 811.7, 'Filter payment method', METHODS.map(([i, t], k) => check(i, t, !k)).join(''));
filter(2098, 811.7, 'Filter status', check('', 'All', true) + STATES.map(s => check('', badge(...s), false)).join(''));
filter(2205.3, 812.7, 'Sort', SORT.map((s, k) => radio(s, !k)).join(''));

document.getElementById('canvas').innerHTML = out.join('\n');
```
